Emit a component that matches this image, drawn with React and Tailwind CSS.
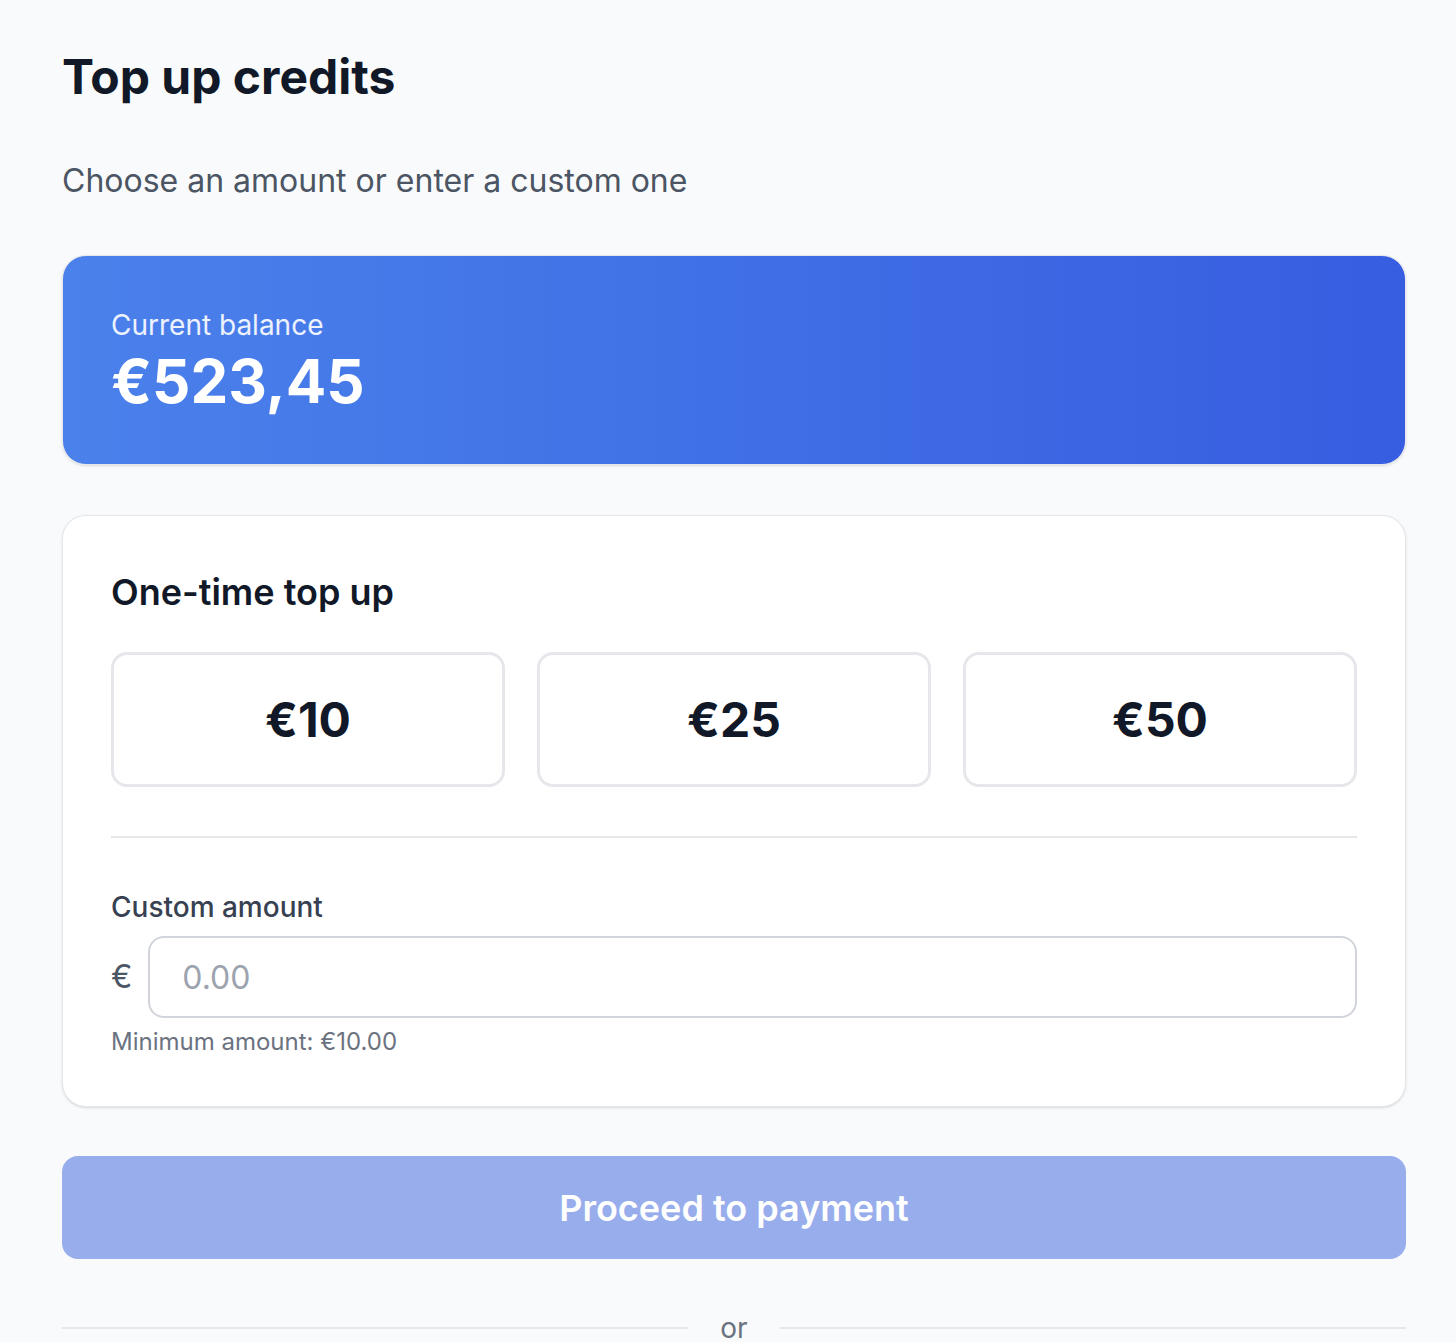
import React, { useState } from 'react';

const PRESETS = [10, 25, 50];

const App = () => {
  const [amount, setAmount] = useState('');

  return (
    <div className="min-h-screen bg-[#f9fafb] font-['Inter',sans-serif]">
      <div className="w-[1344px] pl-[62px] box-content pt-[53px]">
        <h1 className="text-[48px] leading-none font-bold text-[#111827]">Top up credits</h1>
        <p className="mt-16 text-[32px] leading-[32px] text-[#4b5563]">Choose an amount or enter a custom one</p>

        {/* saldo */}
        <div className="mt-[58px] rounded-[24px] border border-[#e5e7eb] bg-linear-to-r from-[#4b81eb] to-[#375de0] p-12 shadow-sm">
          <p className="text-[28px] leading-[42px] text-white/90">Current balance</p>
          <p className="text-[60px] leading-[70px] font-bold text-white">€523,45</p>
        </div>

        <div className="mt-[50px] rounded-[24px] border border-[#e5e7eb] bg-white px-12 pt-[52px] pb-12 shadow-sm">
          <h2 className="text-[36px] leading-[48px] font-semibold text-[#111827]">One-time top up</h2>
          <div className="mt-9 grid grid-cols-3 gap-8">
            {PRESETS.map(p => (
              <button
                key={p}
                onClick={() => setAmount(String(p))}
                className="h-[135px] rounded-[16px] border-[3px] border-[#e5e7eb] bg-white flex items-center justify-center text-[48px] font-bold text-[#111827]"
              >
                €{p}
              </button>
            ))}
          </div>

          <div className="mt-[49px] h-[2px] bg-[#e5e7eb]" />

          <label className="mt-12 block text-[28px] leading-[42px] font-medium text-[#374151]">Custom amount</label>
          <div className="mt-2 flex items-center gap-4">
            <span className="text-[32px] text-[#4b5563]">€</span>
            <input
              value={amount}
              onChange={e => setAmount(e.target.value)}
              placeholder="0.00"
              className="flex-1 h-[82px] rounded-[16px] border-2 border-[#d1d5db] px-8 text-[32px] text-[#111827] placeholder:text-[#9ca3af] outline-none"
            />
          </div>
          <p className="mt-2 text-[24px] leading-[32px] text-[#6b7280]">Minimum amount: €10.00</p>
        </div>

        <button
          disabled
          className="mt-[49px] w-full h-[103px] rounded-[16px] bg-[#98aeec] text-[36px] font-semibold text-white"
        >
          Proceed to payment
        </button>

        <div className="mt-12 flex items-center">
          <div className="flex-1 h-[2px] bg-[#e5e7eb]" />
          <span className="px-8 text-[28px] leading-[42px] text-[#6b7280]">or</span>
          <div className="flex-1 h-[2px] bg-[#e5e7eb]" />
        </div>
      </div>
    </div>
  );
};

export default App;
